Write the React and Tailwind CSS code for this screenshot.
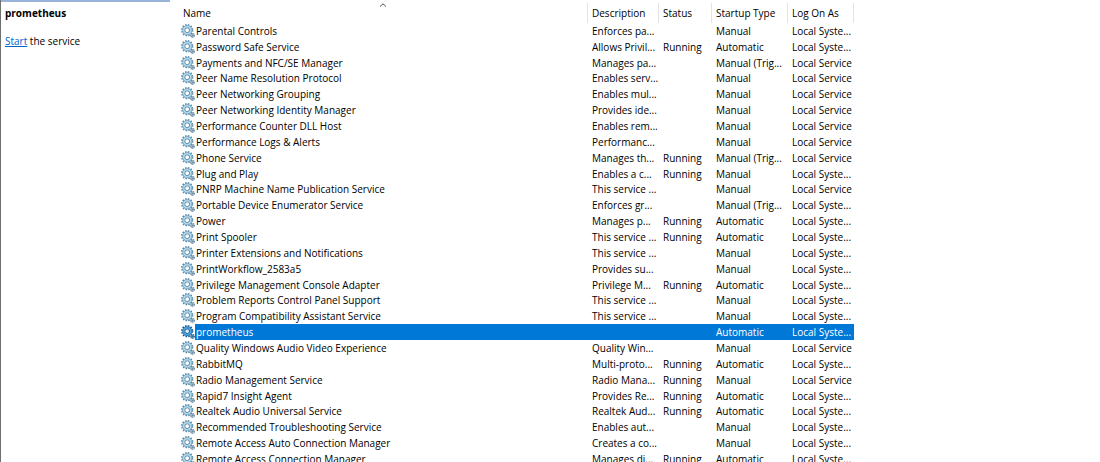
const services = [
  ['Parental Controls', 'Enforces pa...', '', 'Manual', 'Local Syste...'],
  ['Password Safe Service', 'Allows Privil...', 'Running', 'Automatic', 'Local Syste...'],
  ['Payments and NFC/SE Manager', 'Manages pa...', '', 'Manual (Trig...', 'Local Service'],
  ['Peer Name Resolution Protocol', 'Enables serv...', '', 'Manual', 'Local Service'],
  ['Peer Networking Grouping', 'Enables mul...', '', 'Manual', 'Local Service'],
  ['Peer Networking Identity Manager', 'Provides ide...', '', 'Manual', 'Local Service'],
  ['Performance Counter DLL Host', 'Enables rem...', '', 'Manual', 'Local Service'],
  ['Performance Logs & Alerts', 'Performanc...', '', 'Manual', 'Local Service'],
  ['Phone Service', 'Manages th...', 'Running', 'Manual (Trig...', 'Local Service'],
  ['Plug and Play', 'Enables a c...', 'Running', 'Manual', 'Local Syste...'],
  ['PNRP Machine Name Publication Service', 'This service ...', '', 'Manual', 'Local Service'],
  ['Portable Device Enumerator Service', 'Enforces gr...', '', 'Manual (Trig...', 'Local Syste...'],
  ['Power', 'Manages p...', 'Running', 'Automatic', 'Local Syste...'],
  ['Print Spooler', 'This service ...', 'Running', 'Automatic', 'Local Syste...'],
  ['Printer Extensions and Notifications', 'This service ...', '', 'Manual', 'Local Syste...'],
  ['PrintWorkflow_2583a5', 'Provides su...', '', 'Manual', 'Local Syste...'],
  ['Privilege Management Console Adapter', 'Privilege M...', 'Running', 'Automatic', 'Local Syste...'],
  ['Problem Reports Control Panel Support', 'This service ...', '', 'Manual', 'Local Syste...'],
  ['Program Compatibility Assistant Service', 'This service ...', '', 'Manual', 'Local Syste...'],
  ['prometheus', '', '', 'Automatic', 'Local Syste...'],
  ['Quality Windows Audio Video Experience', 'Quality Win...', '', 'Manual', 'Local Service'],
  ['RabbitMQ', 'Multi-proto...', 'Running', 'Automatic', 'Local Syste...'],
  ['Radio Management Service', 'Radio Mana...', 'Running', 'Manual', 'Local Service'],
  ['Rapid7 Insight Agent', 'Provides Re...', 'Running', 'Automatic', 'Local Syste...'],
  ['Realtek Audio Universal Service', 'Realtek Aud...', 'Running', 'Automatic', 'Local Syste...'],
  ['Recommended Troubleshooting Service', 'Enables aut...', '', 'Manual', 'Local Syste...'],
  ['Remote Access Auto Connection Manager', 'Creates a co...', '', 'Manual', 'Local Syste...'],
  ['Remote Access Connection Manager', 'Manages di...', 'Running', 'Automatic', 'Local Syste...'],
];

const selectedName = 'prometheus';

function GearIcon({ selected }) {
  const rim = selected ? '#0b5594' : '#5488a8';
  const fill = selected ? '#4fa3dd' : '#b3d9ee';
  const small = selected ? '#3d6f96' : '#6c8b9f';
  return (
    <svg viewBox="0 0 14 14" className="h-3.5 w-3.5 shrink-0" aria-hidden="true">
      <circle cx="6.2" cy="6.2" r="5.4" fill="none" stroke={rim} strokeWidth="1.5" strokeDasharray="1.5 1.327" />
      <circle cx="6.2" cy="6.2" r="3.7" fill="none" stroke={fill} strokeWidth="2.2" />
      <circle cx="6.2" cy="6.2" r="4.7" fill="none" stroke={rim} strokeWidth="0.6" />
      <circle cx="6.2" cy="6.2" r="2.4" fill={selected ? '#d5ebfa' : '#ffffff'} stroke={rim} strokeWidth="1" />
      <circle cx="11.4" cy="11.4" r="1.8" fill={fill} stroke={small} strokeWidth="1.5" strokeDasharray="1.1 0.5" />
      <circle cx="11.4" cy="11.4" r="0.8" fill={small} />
    </svg>
  );
}

function HeaderCell({ label, first }) {
  return (
    <th scope="col" aria-sort={first ? 'ascending' : undefined} className="p-0 pt-[3px] align-top font-normal">
      <button
        type="button"
        className={
          'relative block h-5 w-full border-r border-[#e3e3e3] text-left leading-5 ' +
          (first ? 'pl-[13px]' : 'pl-1')
        }
      >
        {label}
        {first && (
          <svg viewBox="0 0 8 4" className="absolute top-0 left-[209px] h-1 w-2" aria-hidden="true">
            <path d="M1 3.6 L4 0.8 L7 3.6" fill="none" stroke="#555" strokeWidth="1" />
          </svg>
        )}
      </button>
    </th>
  );
}

function ServiceRow({ service }) {
  const [name, ...details] = service;
  const selected = name === selectedName;
  return (
    <tr aria-selected={selected} className="h-4 leading-[14px] nth-[7n+3]:h-[15px]">
      <td className="h-px p-0 pl-[11px]">
        <div className="flex h-full items-center">
          <GearIcon selected={selected} />
          <span className={'h-full flex-1 pt-px pl-px ' + (selected ? 'bg-[#0078d7] text-white' : '')}>{name}</span>
        </div>
      </td>
      {details.map((text, i) => (
        <td key={i} className={'p-0 pt-px pl-1 align-top ' + (selected ? 'bg-[#0078d7] text-white' : '')}>
          {text}
        </td>
      ))}
    </tr>
  );
}

export default function App() {
  return (
    <div className="flex h-screen overflow-hidden border-l border-[#6f6f6f] bg-white font-['Open_Sans','Noto_Sans',sans-serif] text-[10px] text-black">
      <aside className="w-[169px] shrink-0">
        <div className="h-0.5 bg-[#99b4d8]" />
        <h1 className="pt-[3px] pl-1 leading-4 font-bold">{selectedName}</h1>
        <p className="mt-3 pl-1 leading-4">
          <a href="#start" className="text-[#0066cc] underline">Start</a> the service
        </p>
      </aside>
      <main className="min-w-0 flex-1">
        <table className="w-[684px] table-fixed border-collapse whitespace-nowrap">
          <colgroup>
            <col />
            <col className="w-[71px]" />
            <col className="w-[53px]" />
            <col className="w-[76px]" />
            <col className="w-[66px]" />
          </colgroup>
          <thead>
            <tr>
              <HeaderCell label="Name" first />
              <HeaderCell label="Description" />
              <HeaderCell label="Status" />
              <HeaderCell label="Startup Type" />
              <HeaderCell label="Log On As" />
            </tr>
          </thead>
          <tbody>
            {services.map((service) => (
              <ServiceRow key={service[0]} service={service} />
            ))}
          </tbody>
        </table>
      </main>
    </div>
  );
}
